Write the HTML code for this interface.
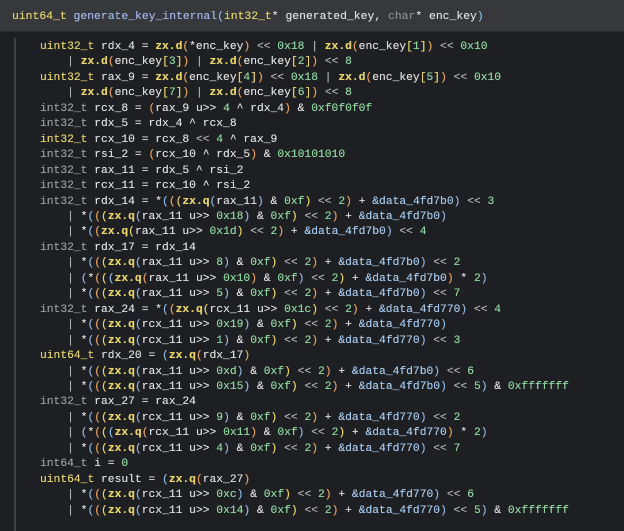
<!DOCTYPE html>
<html><head><meta charset="utf-8"><style>
html,body{margin:0;padding:0;width:624px;height:531px;overflow:hidden;background:#1e1f22;font-family:"Liberation Mono",monospace;}
.hdr{position:absolute;left:0;top:0;width:624px;height:31px;background:#36383b;border-bottom:1px solid #2a2b2e;}
.hdr pre{position:absolute;left:12px;top:10px;font-size:11.4px;}
pre{margin:0;font-size:11.3px;line-height:15.45px;color:#dcdcdc;font-family:"Liberation Mono",monospace;text-shadow:0 0 0.4px currentColor;}
.body{position:absolute;left:40px;top:40px;}
.bar{position:absolute;left:14px;top:38px;width:2px;height:493px;background:#3e4044;}
.t{color:#e3d26e}.g{color:#9a9a9a}.n{color:#8fd3a0}.f{color:#e6d46a;font-weight:bold}.d{color:#a3c6e8}
.o{color:#b0b0b0}.p1{color:#8fb4e0}.p2{color:#e0a060}.p3{color:#e6d46a}.fn{color:#9fb4e6}.c{color:#8a8a8a}
</style></head><body>
<div class="hdr"><pre><span class="t">uint64_t</span> <span class="fn">generate_key_internal</span><span class="p1">(</span><span class="t">int32_t</span>* generated_key, <span class="c">char</span>* enc_key<span class="p1">)</span></pre></div>
<div class="bar"></div>
<pre class="body"><span class="t">uint32_t</span> rdx_4 = <span class="f">zx.d</span><span class="p2">(</span>*enc_key<span class="p2">)</span> <span class="o">&lt;&lt;</span> <span class="n">0x18</span> <span class="o">|</span> <span class="f">zx.d</span><span class="p2">(</span>enc_key<span class="p3">[</span><span class="n">1</span><span class="p3">]</span><span class="p2">)</span> <span class="o">&lt;&lt;</span> <span class="n">0x10</span>
    <span class="o">|</span> <span class="f">zx.d</span><span class="p2">(</span>enc_key<span class="p3">[</span><span class="n">3</span><span class="p3">]</span><span class="p2">)</span> <span class="o">|</span> <span class="f">zx.d</span><span class="p2">(</span>enc_key<span class="p3">[</span><span class="n">2</span><span class="p3">]</span><span class="p2">)</span> <span class="o">&lt;&lt;</span> <span class="n">8</span>
<span class="t">uint32_t</span> rax_9 = <span class="f">zx.d</span><span class="p2">(</span>enc_key<span class="p3">[</span><span class="n">4</span><span class="p3">]</span><span class="p2">)</span> <span class="o">&lt;&lt;</span> <span class="n">0x18</span> <span class="o">|</span> <span class="f">zx.d</span><span class="p2">(</span>enc_key<span class="p3">[</span><span class="n">5</span><span class="p3">]</span><span class="p2">)</span> <span class="o">&lt;&lt;</span> <span class="n">0x10</span>
    <span class="o">|</span> <span class="f">zx.d</span><span class="p2">(</span>enc_key<span class="p3">[</span><span class="n">7</span><span class="p3">]</span><span class="p2">)</span> <span class="o">|</span> <span class="f">zx.d</span><span class="p2">(</span>enc_key<span class="p3">[</span><span class="n">6</span><span class="p3">]</span><span class="p2">)</span> <span class="o">&lt;&lt;</span> <span class="n">8</span>
<span class="g">int32_t</span> rcx_8 = <span class="p2">(</span>rax_9 u&gt;&gt; <span class="n">4</span> ^ rdx_4<span class="p2">)</span> &amp; <span class="n">0xf0f0f0f</span>
<span class="g">int32_t</span> rdx_5 = rdx_4 ^ rcx_8
<span class="t">int32_t</span> rcx_10 = rcx_8 <span class="o">&lt;&lt;</span> <span class="n">4</span> ^ rax_9
<span class="g">int32_t</span> rsi_2 = <span class="p2">(</span>rcx_10 ^ rdx_5<span class="p2">)</span> &amp; <span class="n">0x10101010</span>
<span class="g">int32_t</span> rax_11 = rdx_5 ^ rsi_2
<span class="g">int32_t</span> rcx_11 = rcx_10 ^ rsi_2
<span class="g">int32_t</span> rdx_14 = *<span class="p1">(</span><span class="p2">(</span><span class="p3">(</span><span class="f">zx.q</span><span class="p1">(</span>rax_11<span class="p1">)</span> &amp; <span class="n">0xf</span><span class="p3">)</span> <span class="o">&lt;&lt;</span> <span class="n">2</span><span class="p2">)</span> + <span class="d">&amp;data_4fd7b0</span><span class="p1">)</span> <span class="o">&lt;&lt;</span> <span class="n">3</span>
    <span class="o">|</span> *<span class="p1">(</span><span class="p2">(</span><span class="p3">(</span><span class="f">zx.q</span><span class="p1">(</span>rax_11 u&gt;&gt; <span class="n">0x18</span><span class="p1">)</span> &amp; <span class="n">0xf</span><span class="p3">)</span> <span class="o">&lt;&lt;</span> <span class="n">2</span><span class="p2">)</span> + <span class="d">&amp;data_4fd7b0</span><span class="p1">)</span>
    <span class="o">|</span> *<span class="p1">(</span><span class="p2">(</span><span class="f">zx.q</span><span class="p3">(</span>rax_11 u&gt;&gt; <span class="n">0x1d</span><span class="p3">)</span> <span class="o">&lt;&lt;</span> <span class="n">2</span><span class="p2">)</span> + <span class="d">&amp;data_4fd7b0</span><span class="p1">)</span> <span class="o">&lt;&lt;</span> <span class="n">4</span>
<span class="g">int32_t</span> rdx_17 = rdx_14
    <span class="o">|</span> *<span class="p1">(</span><span class="p2">(</span><span class="p3">(</span><span class="f">zx.q</span><span class="p1">(</span>rax_11 u&gt;&gt; <span class="n">8</span><span class="p1">)</span> &amp; <span class="n">0xf</span><span class="p3">)</span> <span class="o">&lt;&lt;</span> <span class="n">2</span><span class="p2">)</span> + <span class="d">&amp;data_4fd7b0</span><span class="p1">)</span> <span class="o">&lt;&lt;</span> <span class="n">2</span>
    <span class="o">|</span> <span class="p1">(</span>*<span class="p2">(</span><span class="p3">(</span><span class="p1">(</span><span class="f">zx.q</span><span class="p2">(</span>rax_11 u&gt;&gt; <span class="n">0x10</span><span class="p2">)</span> &amp; <span class="n">0xf</span><span class="p1">)</span> <span class="o">&lt;&lt;</span> <span class="n">2</span><span class="p3">)</span> + <span class="d">&amp;data_4fd7b0</span><span class="p2">)</span> * <span class="n">2</span><span class="p1">)</span>
    <span class="o">|</span> *<span class="p1">(</span><span class="p2">(</span><span class="p3">(</span><span class="f">zx.q</span><span class="p1">(</span>rax_11 u&gt;&gt; <span class="n">5</span><span class="p1">)</span> &amp; <span class="n">0xf</span><span class="p3">)</span> <span class="o">&lt;&lt;</span> <span class="n">2</span><span class="p2">)</span> + <span class="d">&amp;data_4fd7b0</span><span class="p1">)</span> <span class="o">&lt;&lt;</span> <span class="n">7</span>
<span class="g">int32_t</span> rax_24 = *<span class="p1">(</span><span class="p2">(</span><span class="f">zx.q</span><span class="p3">(</span>rcx_11 u&gt;&gt; <span class="n">0x1c</span><span class="p3">)</span> <span class="o">&lt;&lt;</span> <span class="n">2</span><span class="p2">)</span> + <span class="d">&amp;data_4fd770</span><span class="p1">)</span> <span class="o">&lt;&lt;</span> <span class="n">4</span>
    <span class="o">|</span> *<span class="p1">(</span><span class="p2">(</span><span class="p3">(</span><span class="f">zx.q</span><span class="p1">(</span>rcx_11 u&gt;&gt; <span class="n">0x19</span><span class="p1">)</span> &amp; <span class="n">0xf</span><span class="p3">)</span> <span class="o">&lt;&lt;</span> <span class="n">2</span><span class="p2">)</span> + <span class="d">&amp;data_4fd770</span><span class="p1">)</span>
    <span class="o">|</span> *<span class="p1">(</span><span class="p2">(</span><span class="p3">(</span><span class="f">zx.q</span><span class="p1">(</span>rcx_11 u&gt;&gt; <span class="n">1</span><span class="p1">)</span> &amp; <span class="n">0xf</span><span class="p3">)</span> <span class="o">&lt;&lt;</span> <span class="n">2</span><span class="p2">)</span> + <span class="d">&amp;data_4fd770</span><span class="p1">)</span> <span class="o">&lt;&lt;</span> <span class="n">3</span>
<span class="t">uint64_t</span> rdx_20 = <span class="p1">(</span><span class="f">zx.q</span><span class="p2">(</span>rdx_17<span class="p2">)</span>
    <span class="o">|</span> *<span class="p1">(</span><span class="p2">(</span><span class="p3">(</span><span class="f">zx.q</span><span class="p1">(</span>rax_11 u&gt;&gt; <span class="n">0xd</span><span class="p1">)</span> &amp; <span class="n">0xf</span><span class="p3">)</span> <span class="o">&lt;&lt;</span> <span class="n">2</span><span class="p2">)</span> + <span class="d">&amp;data_4fd7b0</span><span class="p1">)</span> <span class="o">&lt;&lt;</span> <span class="n">6</span>
    <span class="o">|</span> *<span class="p1">(</span><span class="p2">(</span><span class="p3">(</span><span class="f">zx.q</span><span class="p1">(</span>rax_11 u&gt;&gt; <span class="n">0x15</span><span class="p1">)</span> &amp; <span class="n">0xf</span><span class="p3">)</span> <span class="o">&lt;&lt;</span> <span class="n">2</span><span class="p2">)</span> + <span class="d">&amp;data_4fd7b0</span><span class="p1">)</span> <span class="o">&lt;&lt;</span> <span class="n">5</span><span class="p1">)</span> &amp; <span class="n">0xfffffff</span>
<span class="g">int32_t</span> rax_27 = rax_24
    <span class="o">|</span> *<span class="p1">(</span><span class="p2">(</span><span class="p3">(</span><span class="f">zx.q</span><span class="p1">(</span>rcx_11 u&gt;&gt; <span class="n">9</span><span class="p1">)</span> &amp; <span class="n">0xf</span><span class="p3">)</span> <span class="o">&lt;&lt;</span> <span class="n">2</span><span class="p2">)</span> + <span class="d">&amp;data_4fd770</span><span class="p1">)</span> <span class="o">&lt;&lt;</span> <span class="n">2</span>
    <span class="o">|</span> <span class="p1">(</span>*<span class="p2">(</span><span class="p3">(</span><span class="p1">(</span><span class="f">zx.q</span><span class="p2">(</span>rcx_11 u&gt;&gt; <span class="n">0x11</span><span class="p2">)</span> &amp; <span class="n">0xf</span><span class="p1">)</span> <span class="o">&lt;&lt;</span> <span class="n">2</span><span class="p3">)</span> + <span class="d">&amp;data_4fd770</span><span class="p2">)</span> * <span class="n">2</span><span class="p1">)</span>
    <span class="o">|</span> *<span class="p1">(</span><span class="p2">(</span><span class="p3">(</span><span class="f">zx.q</span><span class="p1">(</span>rcx_11 u&gt;&gt; <span class="n">4</span><span class="p1">)</span> &amp; <span class="n">0xf</span><span class="p3">)</span> <span class="o">&lt;&lt;</span> <span class="n">2</span><span class="p2">)</span> + <span class="d">&amp;data_4fd770</span><span class="p1">)</span> <span class="o">&lt;&lt;</span> <span class="n">7</span>
<span class="g">int64_t</span> i = <span class="n">0</span>
<span class="t">uint64_t</span> result = <span class="p1">(</span><span class="f">zx.q</span><span class="p2">(</span>rax_27<span class="p2">)</span>
    <span class="o">|</span> *<span class="p1">(</span><span class="p2">(</span><span class="p3">(</span><span class="f">zx.q</span><span class="p1">(</span>rcx_11 u&gt;&gt; <span class="n">0xc</span><span class="p1">)</span> &amp; <span class="n">0xf</span><span class="p3">)</span> <span class="o">&lt;&lt;</span> <span class="n">2</span><span class="p2">)</span> + <span class="d">&amp;data_4fd770</span><span class="p1">)</span> <span class="o">&lt;&lt;</span> <span class="n">6</span>
    <span class="o">|</span> *<span class="p1">(</span><span class="p2">(</span><span class="p3">(</span><span class="f">zx.q</span><span class="p1">(</span>rcx_11 u&gt;&gt; <span class="n">0x14</span><span class="p1">)</span> &amp; <span class="n">0xf</span><span class="p3">)</span> <span class="o">&lt;&lt;</span> <span class="n">2</span><span class="p2">)</span> + <span class="d">&amp;data_4fd770</span><span class="p1">)</span> <span class="o">&lt;&lt;</span> <span class="n">5</span><span class="p1">)</span> &amp; <span class="n">0xfffffff</span></pre>
</body></html>
